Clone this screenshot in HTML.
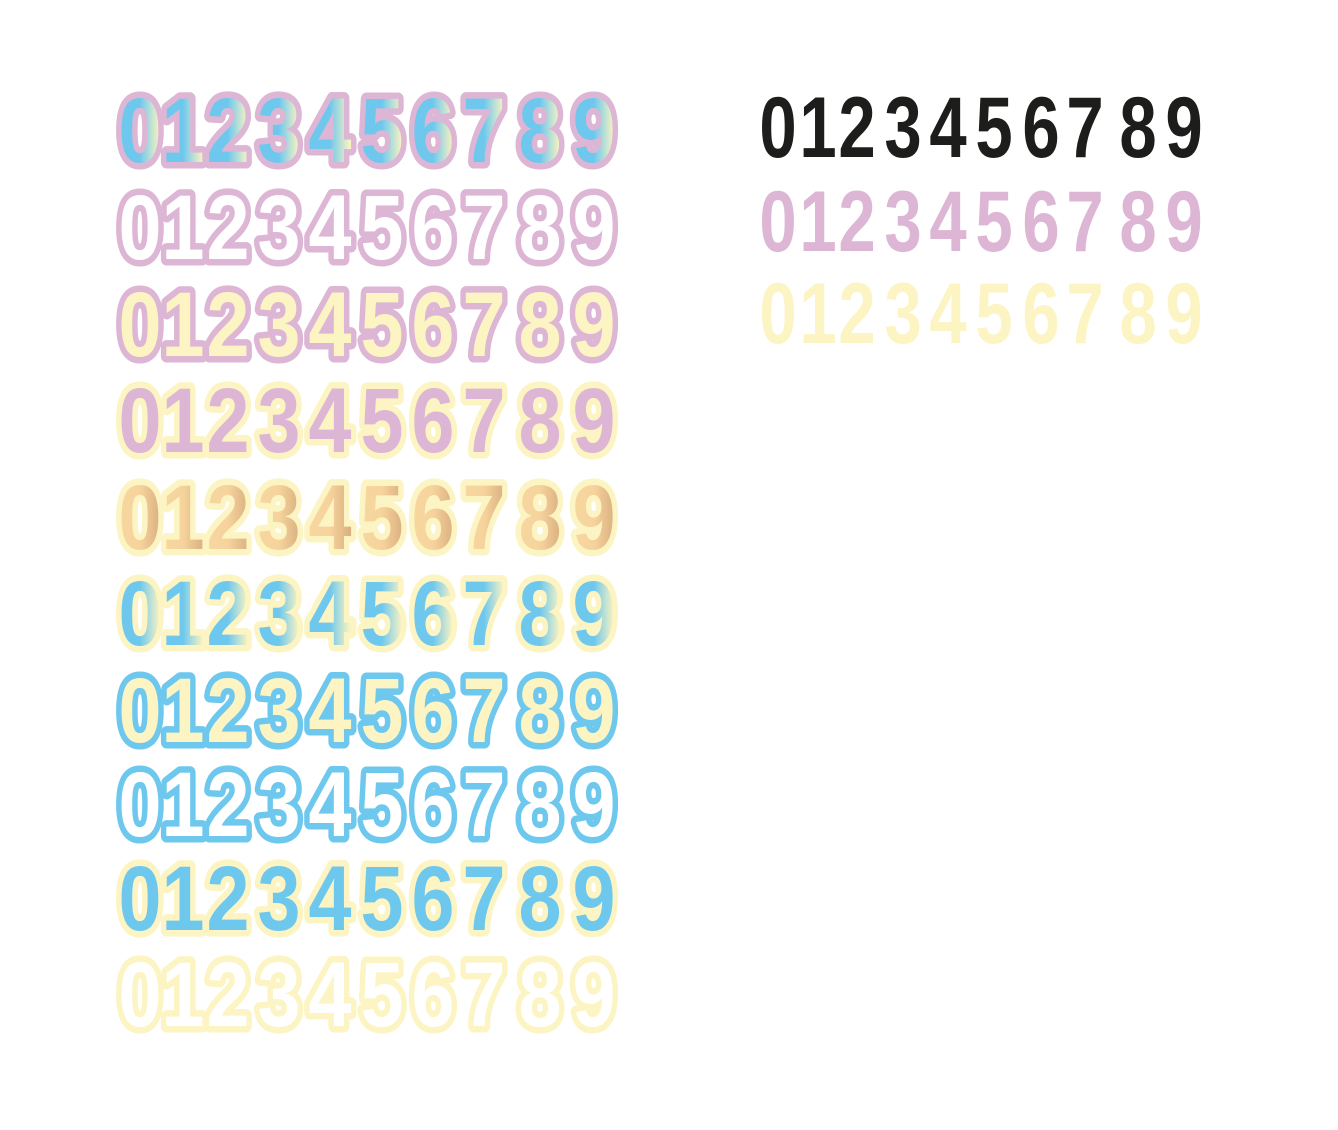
<!DOCTYPE html>
<html><head><style>html,body{margin:0;padding:0;background:#fff;width:1338px;height:1130px;overflow:hidden}</style></head>
<body>
<svg width="1338" height="1130" xmlns="http://www.w3.org/2000/svg" xmlns:xlink="http://www.w3.org/1999/xlink" font-family="Liberation Sans, sans-serif" font-weight="bold" text-anchor="middle">
<defs>
<linearGradient id="by" gradientUnits="userSpaceOnUse" x1="-30" x2="30" y1="0" y2="0"><stop offset="0" stop-color="#6ec8ee"/><stop offset="0.5" stop-color="#6ec8ee"/><stop offset="0.88" stop-color="#f6f2c2"/><stop offset="1" stop-color="#f6f2c2"/></linearGradient>
<linearGradient id="gd" gradientUnits="userSpaceOnUse" x1="-30" x2="30" y1="0" y2="0"><stop offset="0" stop-color="#f8d8a0"/><stop offset="0.5" stop-color="#f6d39c"/><stop offset="1" stop-color="#d4a87a"/></linearGradient>
<g id="L" font-size="92">
<text transform="translate(140,0) scale(0.84,1)">0</text>
<text transform="translate(183,0) scale(0.84,1)">1</text>
<text transform="translate(228,0) scale(0.84,1)">2</text>
<text transform="translate(279,0) scale(0.84,1)">3</text>
<text transform="translate(330,0) scale(0.84,1)">4</text>
<text transform="translate(382,0) scale(0.84,1)">5</text>
<text transform="translate(433,0) scale(0.84,1)">6</text>
<text transform="translate(484,0) scale(0.84,1)">7</text>
<text transform="translate(540,0) scale(0.84,1)">8</text>
<text transform="translate(594,0) scale(0.84,1)">9</text>
</g>
<g id="R" font-size="86">
<text transform="translate(778,0) scale(0.78,1)">0</text>
<text transform="translate(818,0) scale(0.78,1)">1</text>
<text transform="translate(857,0) scale(0.78,1)">2</text>
<text transform="translate(903,0) scale(0.78,1)">3</text>
<text transform="translate(948,0) scale(0.78,1)">4</text>
<text transform="translate(994,0) scale(0.78,1)">5</text>
<text transform="translate(1041,0) scale(0.78,1)">6</text>
<text transform="translate(1085,0) scale(0.78,1)">7</text>
<text transform="translate(1138,0) scale(0.78,1)">8</text>
<text transform="translate(1184,0) scale(0.78,1)">9</text>
</g>
</defs>
<g stroke-width="13" stroke-linejoin="round" paint-order="stroke">
<use xlink:href="#L" href="#L" y="162" fill="url(#by)" stroke="#dcb6d4"/>
<use xlink:href="#L" href="#L" y="259" fill="#fff" stroke="#dcb6d4"/>
<use xlink:href="#L" href="#L" y="356" fill="#fcf4c2" stroke="#dcb6d4"/>
<use xlink:href="#L" href="#L" y="452" fill="#dcb6d4" stroke="#fcf4c2"/>
<use xlink:href="#L" href="#L" y="549" fill="url(#gd)" stroke="#fcf4c2"/>
<use xlink:href="#L" href="#L" y="645" fill="url(#by)" stroke="#fcf4c2"/>
<use xlink:href="#L" href="#L" y="742" fill="#fcf4c2" stroke="#6ec8ee"/>
<use xlink:href="#L" href="#L" y="836" fill="#fff" stroke="#6ec8ee"/>
<use xlink:href="#L" href="#L" y="930" fill="#6ec8ee" stroke="#fcf4c2"/>
<use xlink:href="#L" href="#L" y="1026" fill="#fff" stroke="#fcf4c2"/>
</g>
<use xlink:href="#R" href="#R" y="157" fill="#1d1d1b"/>
<use xlink:href="#R" href="#R" y="251" fill="#dcb6d4"/>
<use xlink:href="#R" href="#R" y="343" fill="#fcf4c2"/>
</svg>
</body></html>
